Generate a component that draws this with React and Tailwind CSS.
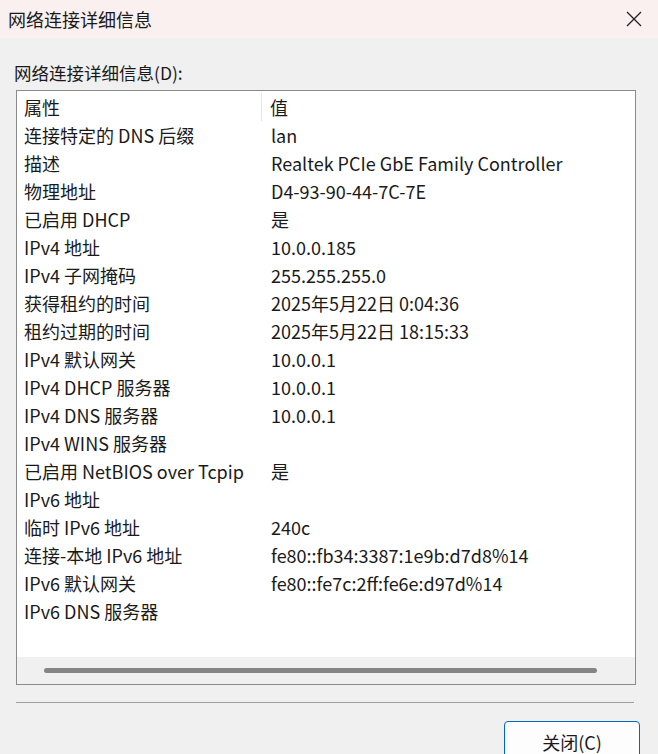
import React from "react";

const rows = [
  ["连接特定的 DNS 后缀", "lan"],
  ["描述", "Realtek PCIe GbE Family Controller"],
  ["物理地址", "D4-93-90-44-7C-7E"],
  ["已启用 DHCP", "是"],
  ["IPv4 地址", "10.0.0.185"],
  ["IPv4 子网掩码", "255.255.255.0"],
  ["获得租约的时间", "2025年5月22日 0:04:36"],
  ["租约过期的时间", "2025年5月22日 18:15:33"],
  ["IPv4 默认网关", "10.0.0.1"],
  ["IPv4 DHCP 服务器", "10.0.0.1"],
  ["IPv4 DNS 服务器", "10.0.0.1"],
  ["IPv4 WINS 服务器", ""],
  ["已启用 NetBIOS over Tcpip", "是"],
  ["IPv6 地址", ""],
  ["临时 IPv6 地址", "240c"],
  ["连接-本地 IPv6 地址", "fe80::fb34:3387:1e9b:d7d8%14"],
  ["IPv6 默认网关", "fe80::fe7c:2ff:fe6e:d97d%14"],
  ["IPv6 DNS 服务器", ""],
];

const font = {
  fontFamily: '"Noto Sans CJK SC", sans-serif',
};

export default function App() {
  return (
    <div
      className="w-[658px] h-[754px] bg-[#f0f0f0] overflow-hidden flex flex-col text-[#1a1a1a]"
      style={font}
    >
      {/* title bar */}
      <div className="h-[38px] shrink-0 bg-[#f9f0ef] flex items-center justify-between pl-[8px] pr-[12px]">
        <span className="text-[18px]">网络连接详细信息</span>
        <svg width="16" height="16" viewBox="0 0 16 16" className="mr-[4px]">
          <path d="M1 1L15 15M15 1L1 15" stroke="#222" strokeWidth="1.3" fill="none" />
        </svg>
      </div>

      <div className="flex flex-col shrink-0 pl-[16px] pr-[22px]">
        <div className="mt-[23px] text-[17.5px] -ml-[2px] leading-[24px]">网络连接详细信息(D):</div>

        <div className="mt-[5px] h-[595px] shrink-0 border border-[#8a8a8a] bg-white flex flex-col">
          <div className="flex-1 pt-[2px]">
            <div className="flex h-[28px] items-center text-[18px]">
              <div className="w-[245px] pl-[7px] border-r border-[#e5e5e5] h-full flex items-center">属性</div>
              <div className="pl-[8px]">值</div>
            </div>
            {rows.map(([k, v], i) => (
              <div key={i} className="flex h-[28px] items-center text-[18px] whitespace-nowrap">
                <div className="w-[246px] pl-[7px]">{k}</div>
                <div className="pl-[8px]">{v}</div>
              </div>
            ))}
          </div>
          <div className="h-[27px] shrink-0 bg-[#f0f0f0] flex items-center pl-[27px] pr-[38px]">
            <div className="h-[5px] flex-1 rounded-full bg-[#858585]" />
          </div>
        </div>

        <div className="mt-[17px] h-[1px] bg-[#a0a0a0] mr-[2px]" />

        <div className="mt-[18px] flex justify-end -mr-[4px]">
          <button className="w-[136px] h-[40px] border border-[#0067c0] rounded-[4px] bg-[#fdfdfd] text-[18px] pt-[2px]">
            关闭(C)
          </button>
        </div>
      </div>
    </div>
  );
}
